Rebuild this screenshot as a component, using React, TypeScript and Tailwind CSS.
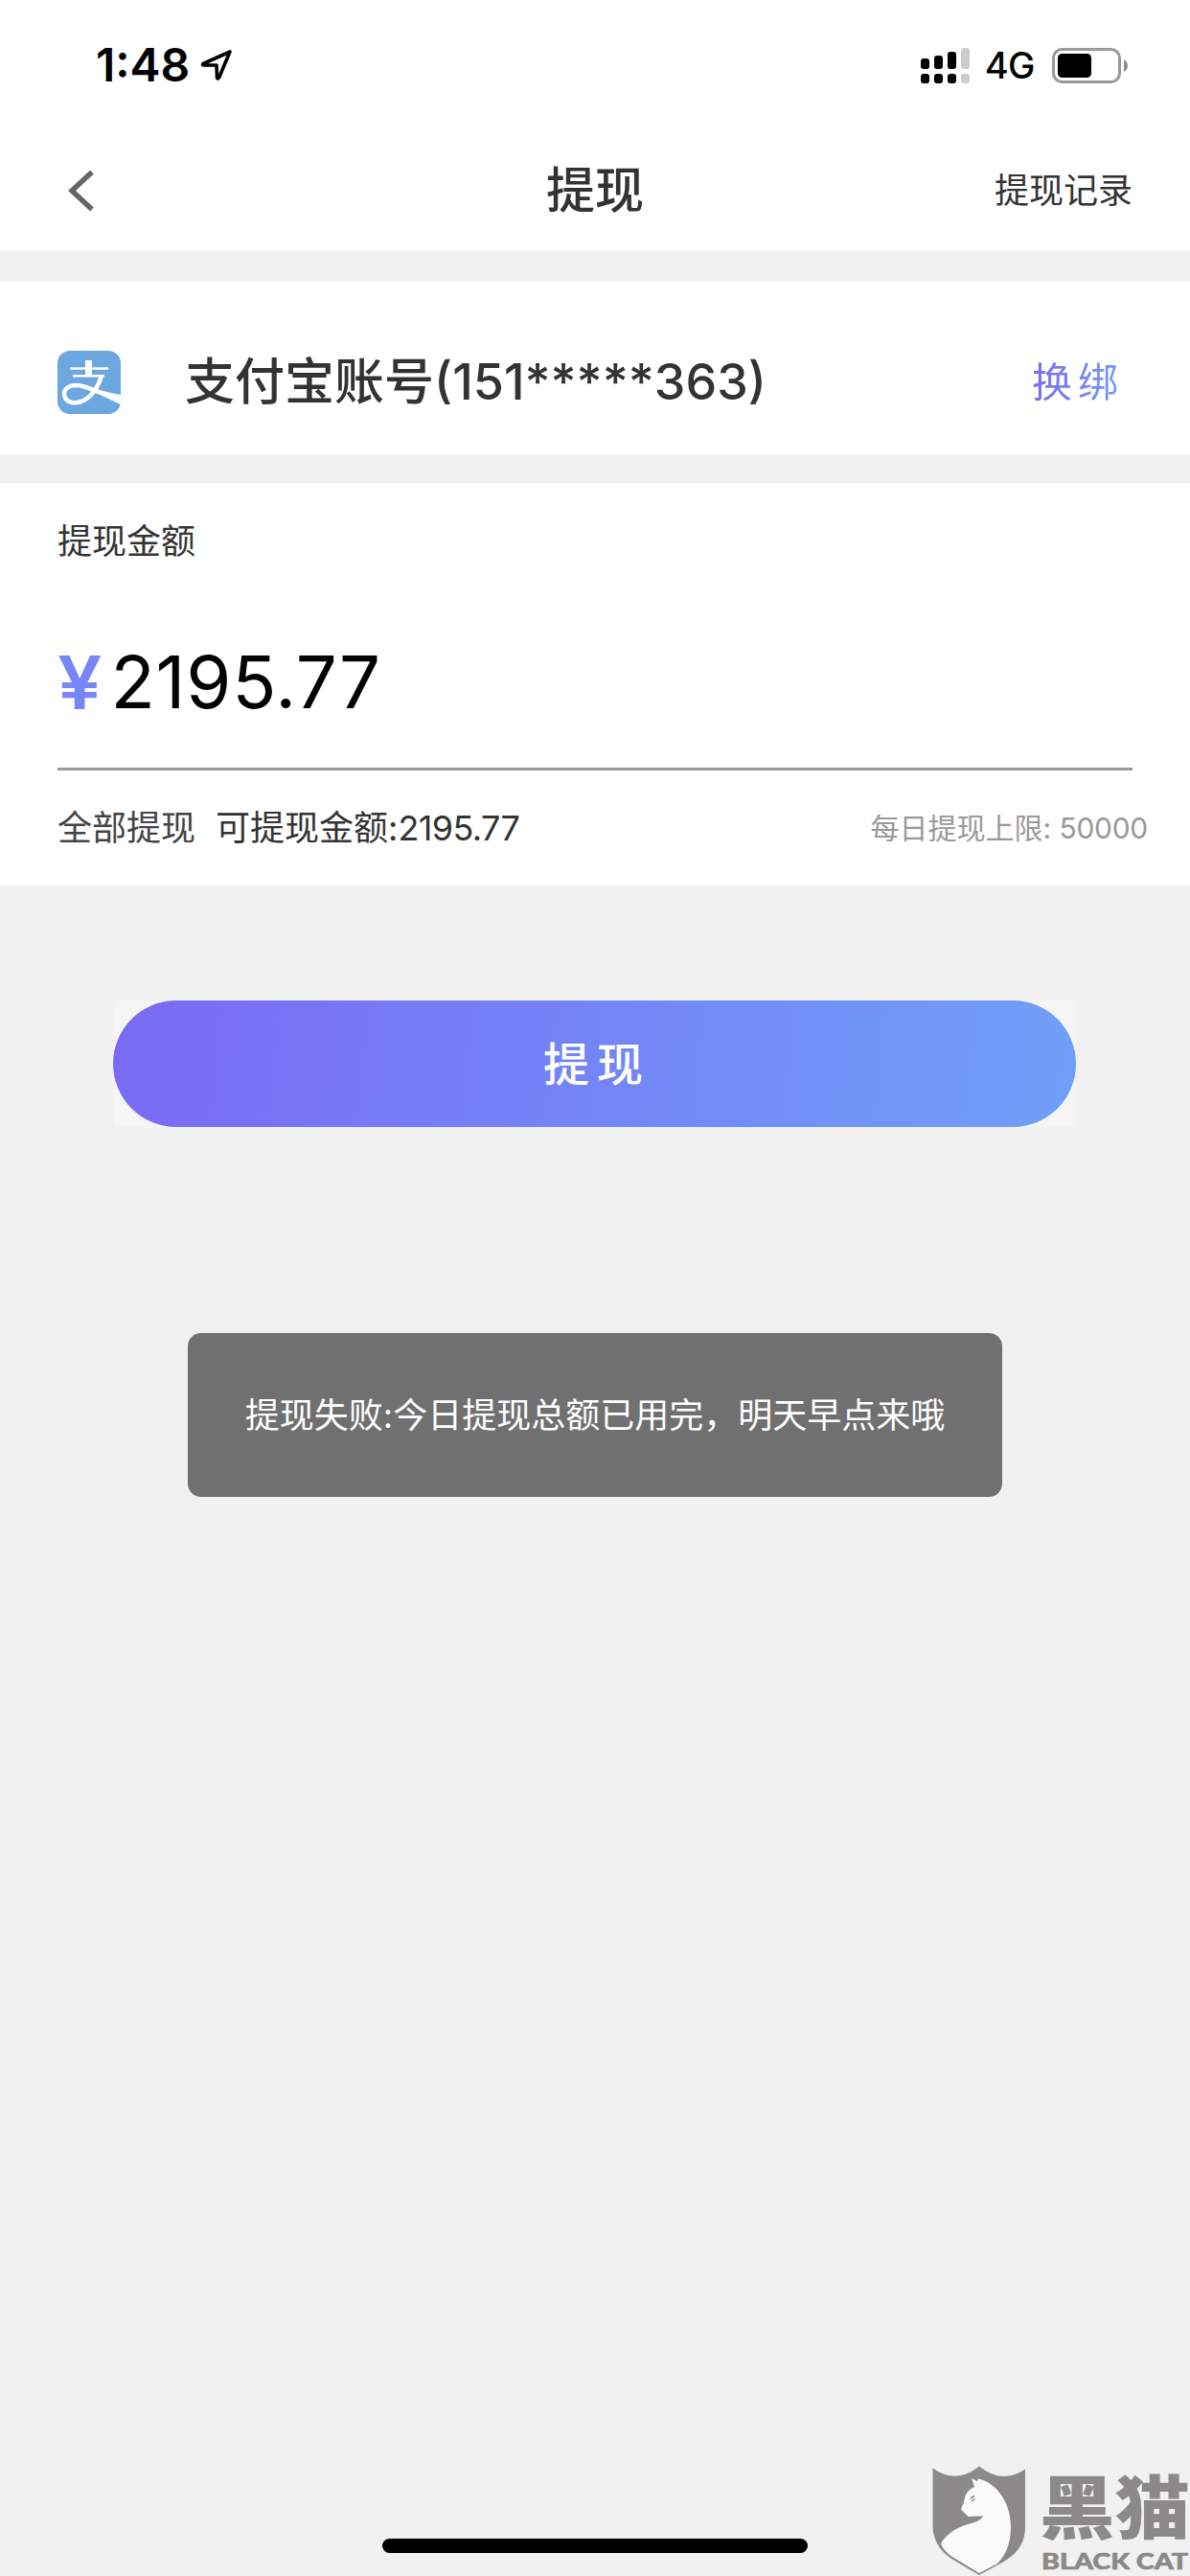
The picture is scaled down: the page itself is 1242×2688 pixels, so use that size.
import { ReactNode } from "react";

function LocationArrow() {
  return (
    <svg width="36" height="34" viewBox="0 0 36 34" fill="none">
      <path
        d="M32 3 L4 15.5 Q2.5 17 5 17 L18 17 L18.5 30 Q19 32.5 21 29 Z"
        stroke="#000"
        strokeWidth="3.6"
        strokeLinejoin="round"
      />
    </svg>
  );
}

function SignalIcon() {
  return (
    <svg width="51" height="37" viewBox="0 0 51 37">
      <g fill="#000">
        <rect x="0" y="11" width="9" height="11" rx="3" />
        <rect x="14" y="8" width="9" height="14" rx="3" />
        <rect x="28" y="4" width="9" height="18" rx="3" />
        <rect x="0" y="27" width="9" height="10" rx="3" />
        <rect x="14" y="27" width="9" height="10" rx="3" />
        <rect x="28" y="27" width="9" height="10" rx="3" />
      </g>
      <g fill="#ccc">
        <rect x="42" y="0" width="9" height="22" rx="3" />
        <rect x="42" y="27" width="9" height="10" rx="3" />
      </g>
    </svg>
  );
}

function BatteryIcon() {
  return (
    <svg width="80" height="37" viewBox="0 0 80 37">
      <rect x="1.5" y="1.5" width="69" height="34" rx="9" fill="none" stroke="#999" strokeWidth="3" />
      <rect x="6" y="6" width="35" height="25" rx="4.5" fill="#000" />
      <path d="M75 12 Q79 14.5 79 18.5 Q79 22.5 75 25 Z" fill="#8c8c8c" />
    </svg>
  );
}

function AlipayIcon() {
  return (
    <svg width="66" height="66" viewBox="0 0 66 66">
      <rect width="66" height="66" rx="13" fill="#6ca8df" />
      <g fill="none" stroke="#fff">
        <path d="M13.5 18.5 H53" strokeWidth="2.5" />
        <path d="M32.5 10 V26" strokeWidth="7" />
        <path d="M16 26.3 H49" strokeWidth="2.5" />
        <path
          d="M46 26 C43 37 36 47 28 51.5 C20 56 10 55 7.5 48 C5 40 12 36 20 36 C27 36 33 39 42 43"
          strokeWidth="4.5"
        />
      </g>
      <path d="M34 37.5 Q48 43 66 46 V56 L38 43 Z" fill="#fff" />
    </svg>
  );
}

/* 黑猫 水印 */
function BlackCatMark() {
  return (
    <svg width="282" height="138" viewBox="0 0 282 138">
      <path
        d="M13.5 25.5 Q38 43 62 23.5 Q86 43 110 26.5 V86 C110 108 97 118 84 125 L62 137 L33 120 C21 112 13.5 100 13.5 86 Z"
        fill="#8b8989"
      />
      <path
        d="M54 36 L59.5 39 L61.5 36.5 C80 41 95 61 95 87 C95 105 89 117 81 125 L62 135 L34 118 C28 114 23 108 22 104 C30 91 42 86 55 82.5 C61 81 64 79 66 75.5 L50.5 76 L43.5 69 C43 66 45 64 46 61 C47 53 50 48 57 45 Z"
        fill="#fafafa"
      />
      <path d="M53 57 L57 54.5 M54 60 L57.5 57.5" stroke="#8b8989" strokeWidth="1.5" />
      <text
        x="125"
        y="93"
        fontSize="72"
        fontWeight="900"
        textLength="157"
        lengthAdjust="spacingAndGlyphs"
        fill="#8b8989"
        className="font-['Noto_Sans_CJK_SC',sans-serif]"
      >
        黑猫
      </text>
      <text
        x="127"
        y="130.5"
        fontSize="22"
        fontWeight="900"
        textLength="153"
        lengthAdjust="spacingAndGlyphs"
        fill="#8b8989"
        stroke="#8b8989"
        strokeWidth="0.6"
        className="font-[Lato,sans-serif]"
      >
        BLACK CAT
      </text>
    </svg>
  );
}

function Panel({ className, children }: { className: string; children: ReactNode }) {
  return <section className={`bg-white ${className}`}>{children}</section>;
}

export default function App() {
  return (
    <div className="relative flex h-[2688px] w-[1242px] flex-col overflow-hidden bg-[#f1f1f1] font-[Inter,'Noto_Sans_CJK_SC',sans-serif] text-[36px] leading-none text-[#333]">
      {/* 状态栏 */}
      <div className="flex h-[136px] items-center justify-between bg-white pr-[64px] pl-[100px]">
        <div className="flex items-center gap-[10px] text-black">
          <span className="text-[48px] font-semibold">1:48</span>
          <LocationArrow />
        </div>
        <div className="flex items-center text-black">
          <SignalIcon />
          <span className="mr-[18px] ml-[16px] text-[38px] font-medium tracking-[-0.5px]">4G</span>
          <BatteryIcon />
        </div>
      </div>

      {/* 标题栏 */}
      <header className="grid h-[125px] grid-cols-3 items-center bg-white px-[60px]">
        <svg width="28" height="44" viewBox="0 0 28 44" fill="none" className="ml-[11px]">
          <path d="M25 2.5 L4 22 L25 41.5" stroke="#666" strokeWidth="5.5" />
        </svg>
        <h1 className="text-center text-[51px] font-medium">提现</h1>
        <button className="text-right">提现记录</button>
      </header>

      {/* 提现账号 */}
      <Panel className="mt-[33px] flex h-[180px] items-center px-[60px] pt-[30px]">
        <AlipayIcon />
        <span className="ml-[67px] text-[52px] font-medium">支付宝账号(151*****363)</span>
        <button className="ml-auto bg-linear-to-r from-[#7b6af3] to-[#72a0f8] bg-clip-text pr-[9px] text-[42px] tracking-[6px] text-transparent">
          换绑
        </button>
      </Panel>

      {/* 提现金额 */}
      <Panel className="mt-[30px] h-[420px] px-[60px] pt-[43px]">
        <p>提现金额</p>
        <div className="mt-[61px] flex h-[160px] items-center border-b-[3px] border-[#999] pb-[23px]">
          <span className="origin-left scale-x-107 pt-[3px] text-[77px] font-semibold text-[#7787f7]">¥</span>
          <span className="ml-[12px] text-[76px] tracking-[0.8px] text-black">2195.77</span>
        </div>
        <div className="-mr-[16px] flex h-[120px] items-center">
          <span className="text-[#444]">全部提现</span>
          <span className="ml-[21px]">
            可提现金额:<span className="tracking-[-0.6px]">2195.77</span>
          </span>
          <span className="ml-auto text-[30px] text-[#999]">
            每日提现上限: <span className="tracking-[-0.3px]">50000</span>
          </span>
        </div>
      </Panel>

      {/* 提现按钮 */}
      <div className="mt-[120px] ml-[118px] w-[1005px] bg-[#f5f5f5]">
        <button className="h-[132px] w-full rounded-full bg-[linear-gradient(96deg,#7b6af3,#728bf8_61%,#719ff8)] pt-[2px] pl-[5px] text-[48px] font-medium tracking-[8px] text-white">
          提现
        </button>
      </div>

      {/* 失败提示 */}
      <div className="mt-[215px] ml-[196px] flex h-[171px] w-[850px] items-center justify-center rounded-[14px] bg-[#707070] text-white">
        提现失败:今日提现总额已用完，明天早点来哦
      </div>

      <div className="absolute right-0 bottom-0">
        <BlackCatMark />
      </div>
      <div className="absolute bottom-[24px] left-[399px] h-[15px] w-[444px] rounded-full bg-black" />
    </div>
  );
}
